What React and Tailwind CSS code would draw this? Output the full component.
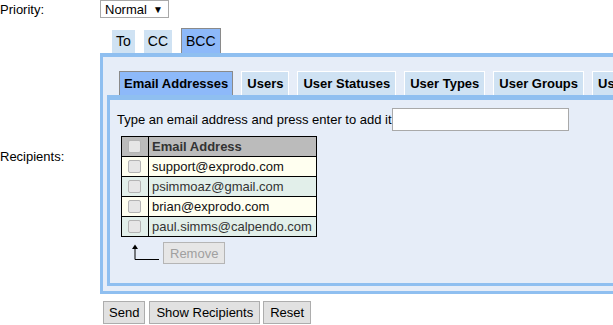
const emails = [
    "support@exprodo.com",
    "psimmoaz@gmail.com",
    "brian@exprodo.com",
    "paul.simms@calpendo.com",
]

const innerTabs = ["Email Addresses", "Users", "User Statuses", "User Types", "User Groups", "User Roles"]

const Box = () => (
    <div className="w-[13px] h-[13px] rounded-[2px] border border-[#b4b4b4] bg-[#e6e6e6]"></div>
)

const App = () => {
    return (
        <div
            className="w-[613px] h-[325px] overflow-hidden bg-white text-[13px] leading-[17px] text-black"
            style={{ fontFamily: '"Liberation Sans", Arial, sans-serif' }}
        >
            <div className="grid grid-cols-[100px_1fr]">
                {/* priority */}
                <div className="h-[18px] flex items-center">Priority:</div>
                <div>
                    <div className="w-[69px] h-[18px] flex items-center justify-between pl-[4px] pr-[5px] border border-[#a9a9a9] bg-white">
                        <span>Normal</span>
                        <span className="text-[10px]">▼</span>
                    </div>
                </div>

                {/* recipients */}
                <div className="self-center">Recipients:</div>
                <div className="w-[620px] mt-[10px]">
                    <div className="flex items-end gap-[9px] pl-[12px] h-[25px] text-[14px]">
                        <div className="h-[23px] px-[4px] flex items-center bg-[#cfe2f3]">To</div>
                        <div className="h-[23px] px-[4px] flex items-center bg-[#cfe2f3]">CC</div>
                        <div className="h-[25px] px-[4px] flex items-center bg-[#8db9f9] border border-b-0 border-[#8a8a8a]">BCC</div>
                    </div>
                    <div className="bg-[#e6edf8] border-t-[4px] border-l-[3px] border-b-[3px] border-[#8fbff0] pt-[14px] pl-[4px] pb-[5px]">
                        <div className="flex items-end gap-[8px] pl-[12px] h-[24px] font-bold">
                            {innerTabs.map((t, i) => (
                                <div
                                    key={t}
                                    className={
                                        i === 0
                                            ? "h-[24px] px-[4px] flex items-center whitespace-nowrap bg-[#8db9f9] border border-b-0 border-[#8a8a8a]"
                                            : "h-[24px] px-[5px] flex items-center whitespace-nowrap bg-[#cfe2f3] border border-b-0 border-white"
                                    }
                                >
                                    {t}
                                </div>
                            ))}
                        </div>
                        <div className="border-t-[5px] border-l-[3px] border-b-[3px] border-[#8fbff0] pt-[8px] pl-[7px] pb-[19px]">
                            <div className="flex items-center h-[23px]">
                                <span>Type an email address and press enter to add it</span>
                                <div className="w-[177px] h-[23px] border border-[#a9a9a9] bg-white"></div>
                            </div>
                            <table className="mt-[5px] ml-[4px] border-collapse border border-black">
                                <thead>
                                    <tr className="bg-[#bbbbbb] h-[20px]">
                                        <th className="w-[27px] border border-black px-[6px]">
                                            <Box />
                                        </th>
                                        <th className="w-[168px] border border-black text-left font-bold text-[#333] px-[3px]">
                                            Email Address
                                        </th>
                                    </tr>
                                </thead>
                                <tbody>
                                    {emails.map((e, i) => (
                                        <tr
                                            key={e}
                                            className={i % 2 === 0 ? "bg-[#fffff0] h-[20px]" : "bg-[#e2efea] h-[20px]"}
                                        >
                                            <td className="border border-black px-[6px]">
                                                <Box />
                                            </td>
                                            <td
                                                className={
                                                    i % 2 === 0
                                                        ? "border border-black px-[3px] text-[#111] whitespace-nowrap"
                                                        : "border border-black px-[3px] text-[#333] whitespace-nowrap"
                                                }
                                            >
                                                {e}
                                            </td>
                                        </tr>
                                    ))}
                                </tbody>
                            </table>
                            <div className="flex items-center mt-[5px] ml-[15px] h-[22px]">
                                <svg width="28" height="20" viewBox="0 0 28 20" className="mt-[2px]">
                                    <path d="M3 4 V15.5 H27" fill="none" stroke="black" strokeWidth="1" />
                                    <path d="M3 0.5 L0 5 H6 Z" fill="black" />
                                </svg>
                                <div className="ml-[3px] h-[22px] px-[6px] flex items-center border border-[#b5b5b5] bg-[#e6e6e6] text-[#a0a0a0]">
                                    Remove
                                </div>
                            </div>
                        </div>
                    </div>
                </div>

                {/* actions */}
                <div></div>
                <div className="flex mt-[7px] ml-[3px]">
                    <div className="h-[23px] px-[5px] mr-[4px] flex items-center border border-[#adadad] bg-[#e1e1e1]">Send</div>
                    <div className="h-[23px] px-[6px] mr-[3px] flex items-center border border-[#adadad] bg-[#e1e1e1]">Show Recipients</div>
                    <div className="h-[23px] px-[6px] flex items-center border border-[#adadad] bg-[#e1e1e1]">Reset</div>
                </div>
            </div>
        </div>
    )
}

export default App
